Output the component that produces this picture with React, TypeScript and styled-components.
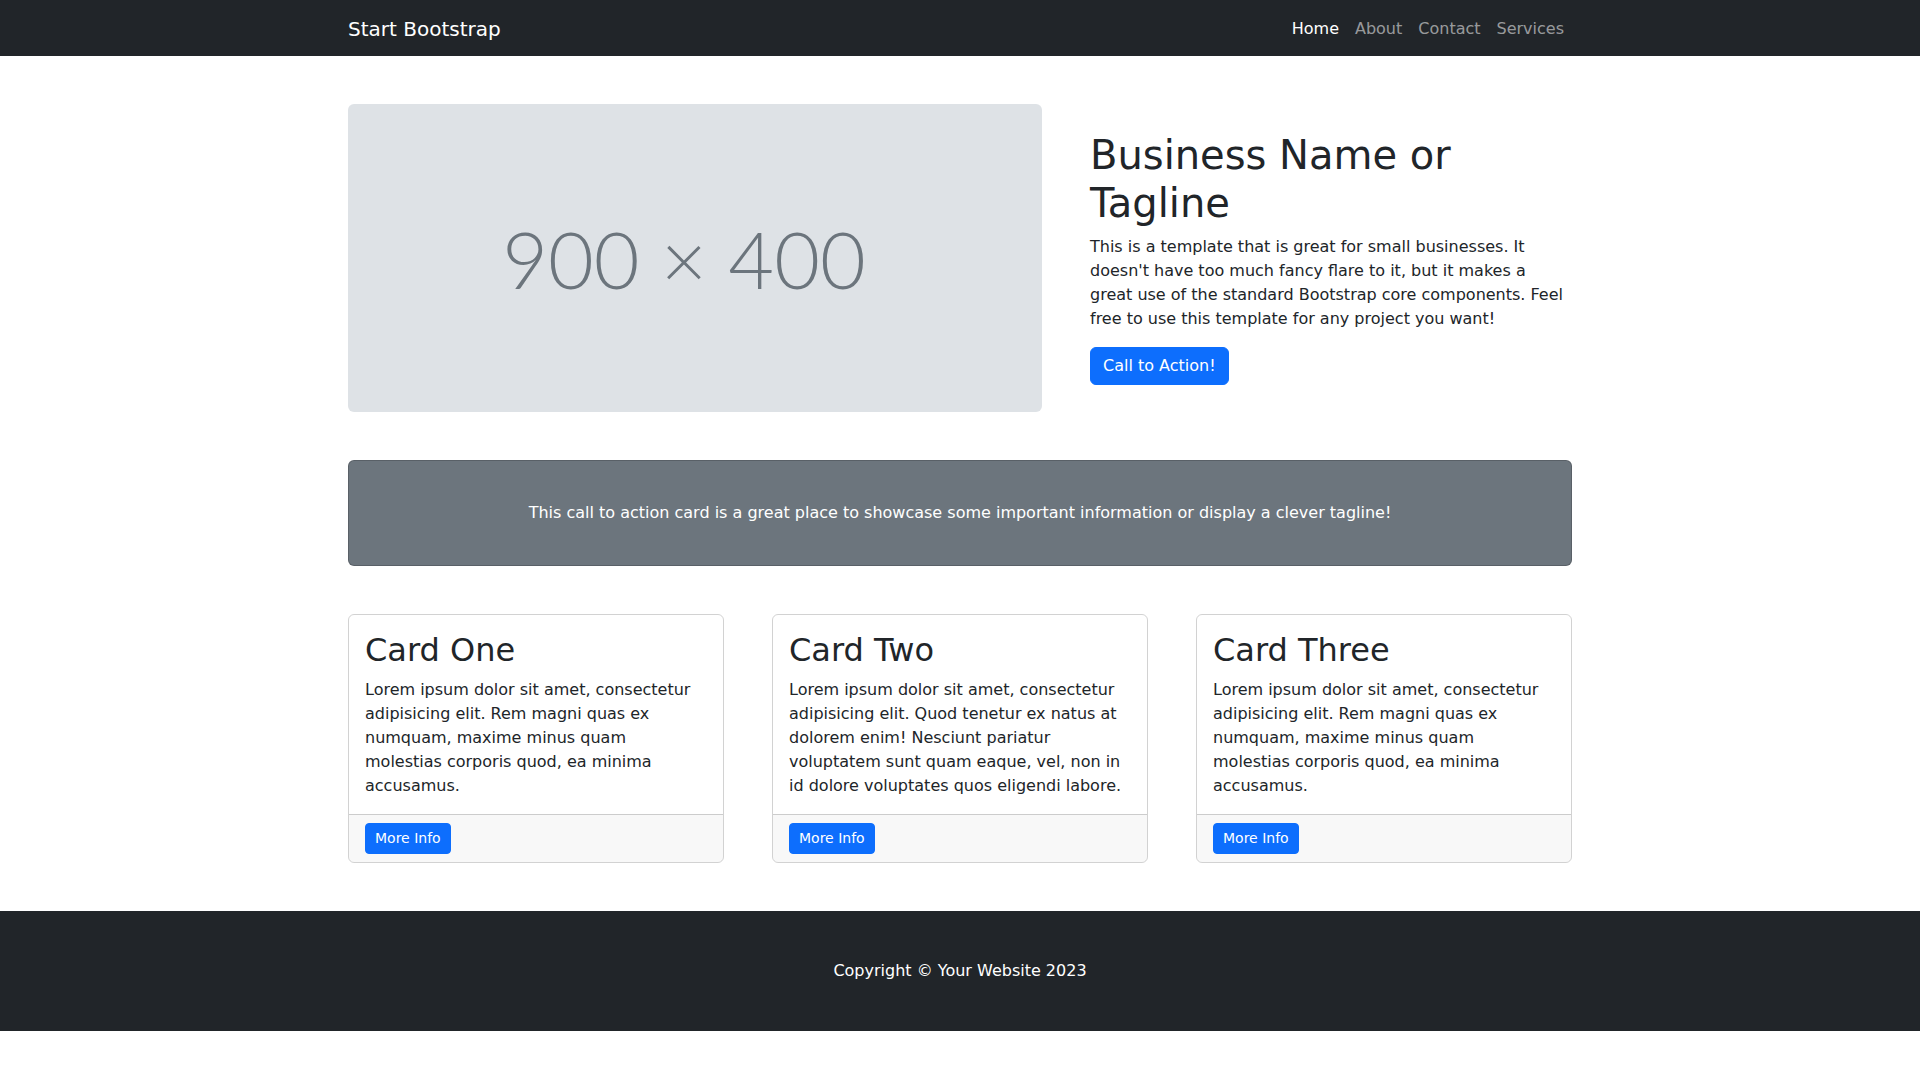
import React from "react";
import styled, { createGlobalStyle } from "styled-components";

const GlobalStyle = createGlobalStyle`
  *, *::before, *::after {
    box-sizing: border-box;
  }

  body {
    margin: 0;
    font-family: "DejaVu Sans", "Liberation Sans", sans-serif;
    font-size: 16px;
    line-height: 1.5;
    color: #212529;
    background: #fff;
  }
`;

const cards = [
  {
    title: "Card One",
    text: "Lorem ipsum dolor sit amet, consectetur adipisicing elit. Rem magni quas ex numquam, maxime minus quam molestias corporis quod, ea minima accusamus.",
  },
  {
    title: "Card Two",
    text: "Lorem ipsum dolor sit amet, consectetur adipisicing elit. Quod tenetur ex natus at dolorem enim! Nesciunt pariatur voluptatem sunt quam eaque, vel, non in id dolore voluptates quos eligendi labore.",
  },
  {
    title: "Card Three",
    text: "Lorem ipsum dolor sit amet, consectetur adipisicing elit. Rem magni quas ex numquam, maxime minus quam molestias corporis quod, ea minima accusamus.",
  },
];

const navLinks = ["Home", "About", "Contact", "Services"];

const App: React.FC = () => {
  return (
    <>
      <GlobalStyle />
      <Navbar>
        <Container>
          <NavInner>
            <Brand href="#!">Start Bootstrap</Brand>
            <NavList>
              {navLinks.map((link, i) => (
                <li key={link}>
                  <NavLink href="#!" $active={i === 0}>
                    {link}
                  </NavLink>
                </li>
              ))}
            </NavList>
          </NavInner>
        </Container>
      </Navbar>

      <Container>
        <HeroRow>
          <HeroImage>
            <PlaceholderText>900 × 400</PlaceholderText>
          </HeroImage>
          <HeroText>
            <Heading>Business Name or Tagline</Heading>
            <Lead>
              This is a template that is great for small businesses. It doesn't
              have too much fancy flare to it, but it makes a great use of the
              standard Bootstrap core components. Feel free to use this template
              for any project you want!
            </Lead>
            <Button href="#!">Call to Action!</Button>
          </HeroText>
        </HeroRow>

        <CallOut>
          <CallOutText>
            This call to action card is a great place to showcase some important
            information or display a clever tagline!
          </CallOutText>
        </CallOut>

        <CardGrid>
          {cards.map((card) => (
            <Card key={card.title}>
              <CardBody>
                <CardTitle>{card.title}</CardTitle>
                <CardText>{card.text}</CardText>
              </CardBody>
              <CardFooter>
                <SmallButton href="#!">More Info</SmallButton>
              </CardFooter>
            </Card>
          ))}
        </CardGrid>
      </Container>

      <Footer>
        <Container>
          <FooterText>Copyright © Your Website 2023</FooterText>
        </Container>
      </Footer>
    </>
  );
};

const Container = styled.div`
  width: 100%;
  max-width: 1320px;
  margin: 0 auto;
  padding: 0 48px;
`;

const Navbar = styled.nav`
  background: #212529;
  padding: 8px 0;
`;

const NavInner = styled.div`
  display: flex;
  align-items: center;
  justify-content: space-between;
`;

const Brand = styled.a`
  font-size: 20px;
  line-height: 30px;
  padding: 6px 0 4px;
  color: #fff;
  text-decoration: none;
`;

const NavList = styled.ul`
  display: flex;
  list-style: none;
  margin: 0;
  padding: 0;
`;

const NavLink = styled.a<{ $active?: boolean }>`
  display: block;
  padding: 9px 8px 7px;
  line-height: 24px;
  color: ${(p) => (p.$active ? "#fff" : "rgba(255, 255, 255, 0.55)")};
  text-decoration: none;
`;

const HeroRow = styled.div`
  display: grid;
  grid-template-columns: 694px 1fr;
  column-gap: 48px;
  align-items: center;
  margin: 48px 0;
`;

/* 900x400 placeholder scaled into the 694px column */
const HeroImage = styled.div`
  height: 308.44px;
  background: #dee2e6;
  border-radius: 6px;
  display: flex;
  align-items: center;
  justify-content: center;
  padding-right: 22px;
`;

const PlaceholderText = styled.span`
  font-family: Lato, "Open Sans", sans-serif;
  font-weight: 300;
  font-size: 79px;
  line-height: 1;
  color: #6c757d;
`;

const HeroText = styled.div``;

const Heading = styled.h1`
  font-size: 40px;
  font-weight: 400;
  line-height: 1.2;
  margin: 0 0 8px;
`;

const Lead = styled.p`
  margin: 0 0 16px;
`;

const Button = styled.a`
  display: inline-block;
  padding: 6px 12px;
  font-size: 16px;
  line-height: 24px;
  color: #fff;
  background: #0d6efd;
  border: 1px solid #0d6efd;
  border-radius: 6px;
  text-decoration: none;
`;

const CallOut = styled.div`
  background: #6c757d;
  border: 1px solid rgba(0, 0, 0, 0.175);
  border-radius: 6px;
  padding: 24px 0;
  margin: 48px 0;
  text-align: center;
`;

const CallOutText = styled.p`
  margin: 0;
  padding: 16px;
  color: #fff;
`;

const CardGrid = styled.div`
  display: grid;
  grid-template-columns: repeat(3, 1fr);
  column-gap: 48px;
  padding-bottom: 48px;
`;

const Card = styled.div`
  display: flex;
  flex-direction: column;
  border: 1px solid rgba(0, 0, 0, 0.175);
  border-radius: 6px;
  overflow: hidden;
`;

const CardBody = styled.div`
  flex: 1;
  padding: 16px;
`;

const CardTitle = styled.h2`
  font-size: 32px;
  font-weight: 400;
  line-height: 1.2;
  margin: 0 0 8px;
`;

const CardText = styled.p`
  margin: 0;
`;

const CardFooter = styled.div`
  padding: 8px 16px;
  background: rgba(33, 37, 41, 0.03);
  border-top: 1px solid rgba(0, 0, 0, 0.175);
`;

const SmallButton = styled(Button)`
  padding: 4px 9px;
  font-size: 14px;
  line-height: 21px;
  border-radius: 4px;
`;

const Footer = styled.footer`
  background: #212529;
  padding: 48px 0;
`;

const FooterText = styled.p`
  margin: 0;
  text-align: center;
  color: #fff;
`;

export default App;
